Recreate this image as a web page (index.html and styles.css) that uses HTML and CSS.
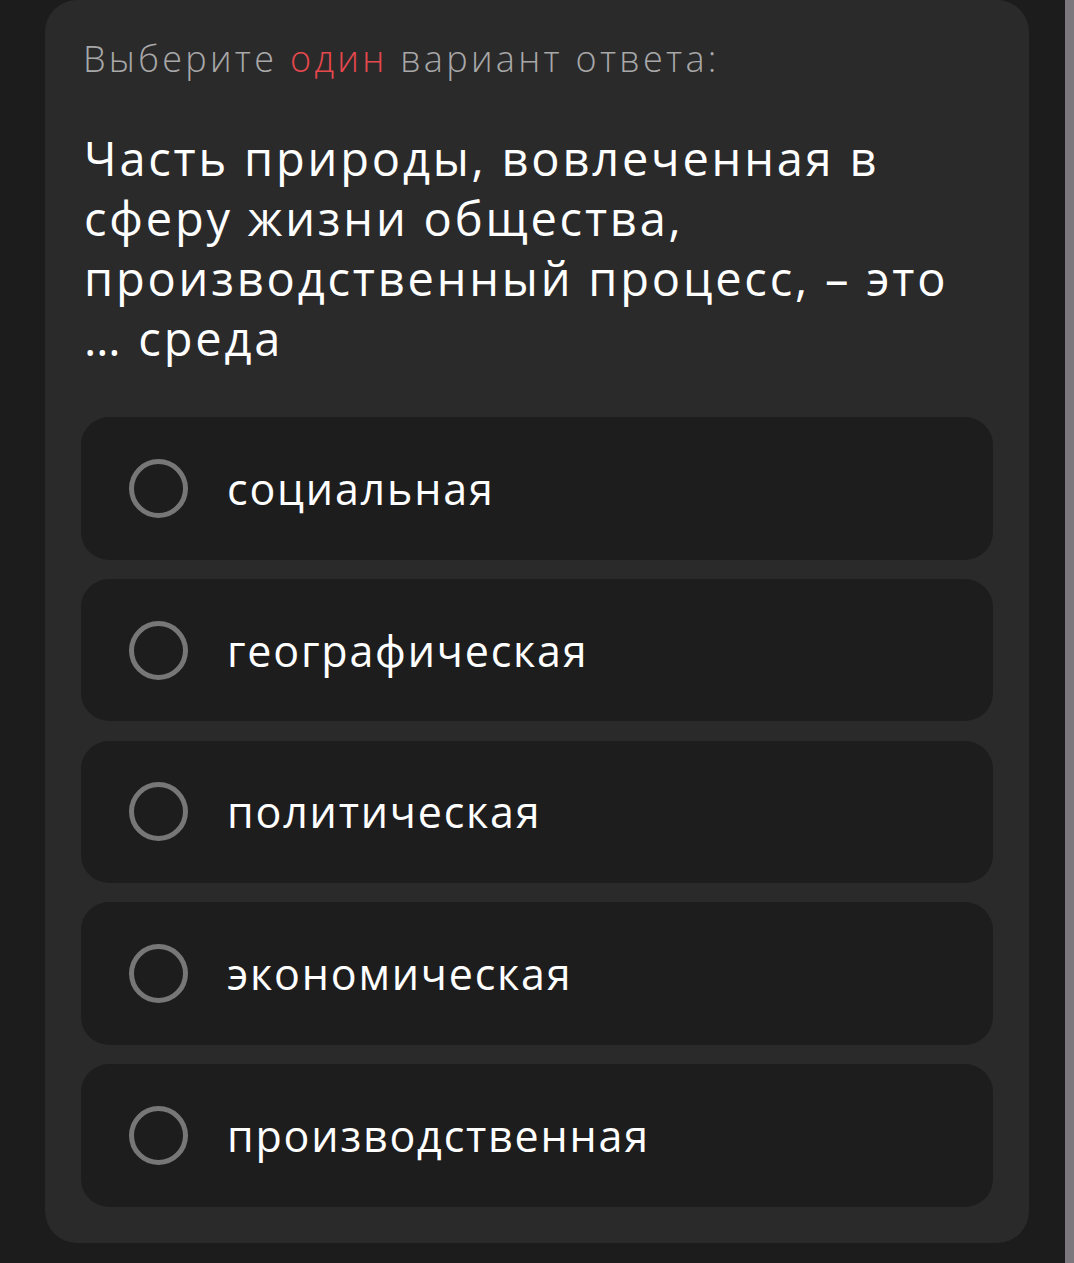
FILE: index.html
```html
<!DOCTYPE html>
<html lang="ru">
<head>
<meta charset="utf-8">
<link rel="stylesheet" href="styles.css">
</head>
<body>
<div class="page">
  <div class="card">
    <div class="hint">Выберите <span class="accent">один</span> вариант ответа:</div>
    <div class="question">Часть природы, вовлеченная в<br>сферу жизни общества,<br>производственный процесс, – это<br>… среда</div>
    <div class="options">
      <div class="option"><span class="radio"></span><span class="label">социальная</span></div>
      <div class="option"><span class="radio"></span><span class="label">географическая</span></div>
      <div class="option"><span class="radio"></span><span class="label">политическая</span></div>
      <div class="option"><span class="radio"></span><span class="label">экономическая</span></div>
      <div class="option"><span class="radio"></span><span class="label">производственная</span></div>
    </div>
  </div>
  <div class="scrollbar"></div>
</div>
</body>
</html>
```

FILE: styles.css
```css
html, body {
  margin: 0;
  padding: 0;
  background: #1c1c1d;
}
.page {
  display: flex;
  width: 1074px;
  height: 1263px;
  overflow: hidden;
}
.card {
  margin-left: 45px;
  width: 984px;
  height: 1243px;
  box-sizing: border-box;
  background: #2a2a2b;
  border-radius: 32px;
  padding: 36px 36px 37px 36px;
  font-family: "Open Sans", "Liberation Sans", sans-serif;
  display: flex;
  flex-direction: column;
}
.hint {
  color: #a8a8a8;
  font-size: 36px;
  line-height: 46px;
  padding-left: 2px;
  font-weight: 300;
  letter-spacing: 3.3px;
  white-space: nowrap;
}
.accent {
  color: #e5484d;
}
.question {
  margin-top: 46px;
  color: #ffffff;
  font-size: 47px;
  line-height: 60px;
  font-weight: 500;
  letter-spacing: 2.8px;
  padding-left: 3px;
  white-space: nowrap;
}
.options {
  margin-top: 49px;
  display: flex;
  flex-direction: column;
  gap: 19.25px;
}
.option {
  height: 142.5px;
  background: #1d1d1e;
  border-radius: 28px;
  display: flex;
  align-items: center;
  padding-left: 48px;
}
.radio {
  width: 49px;
  height: 49px;
  border: 5px solid #777777;
  border-radius: 50%;
  flex: none;
}
.label {
  margin-left: 39px;
  color: #ffffff;
  font-size: 43px;
  font-weight: 400;
  letter-spacing: 1.8px;
}
.scrollbar {
  margin-left: auto;
  width: 9px;
  height: 1263px;
  background: #7b777d;
}
```
